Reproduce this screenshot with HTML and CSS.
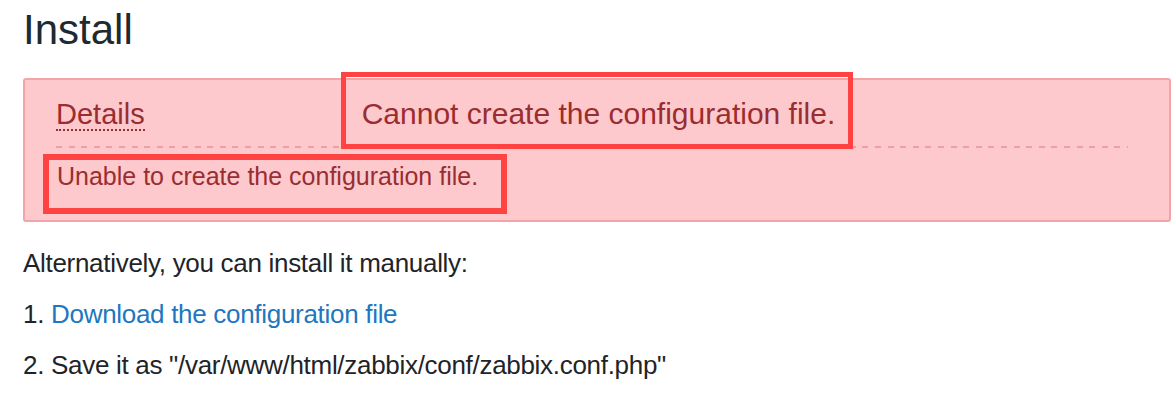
FILE: index.html
```html
<!DOCTYPE html>
<html lang="en">
<head>
<meta charset="utf-8">
<title>Install</title>
<link rel="stylesheet" href="styles.css">
</head>
<body>
<main class="page">
  <h1 class="title">Install</h1>
  <div class="alert">
    <div class="alert-head">
      <span class="details">Details</span>
      <span class="alert-title">Cannot create the configuration file.</span>
    </div>
    <div class="alert-body">Unable to create the configuration file.</div>
    <div class="mark mark-title"></div>
    <div class="mark mark-body"></div>
  </div>
  <p class="line">Alternatively, you can install it manually:</p>
  <p class="line">1. <a class="link" href="#">Download the configuration file</a></p>
  <p class="line">2. Save it as "/var/www/html/zabbix/conf/zabbix.conf.php"</p>
</main>
</body>
</html>
```
FILE: styles.css
```css
html, body {
  margin: 0;
  padding: 0;
  background: #ffffff;
}

.page {
  padding: 6px 5px 0 23px;
  font-family: "Liberation Sans", Arial, sans-serif;
  color: #1f2428;
}

.title {
  margin: 0;
  font-size: 42px;
  font-weight: normal;
  line-height: 48px;
  color: #1e2a30;
}

.alert {
  position: relative;
  margin-top: 24px;
  border: 2px solid #f3a4a7;
  border-radius: 3px;
  background: #fdc9cd;
  color: #9a2d30;
  padding: 16px 41px 0 31px;
  box-sizing: border-box;
  height: 144px;
}

.alert-head {
  display: flex;
  align-items: baseline;
  line-height: 36px;
  padding-bottom: 16px;
  background: repeating-linear-gradient(to right, #eda0a4 0 6px, transparent 6px 12.6px) left bottom / 100% 2px no-repeat;
}

.details {
  flex: none;
  margin-right: 217px;
  font-size: 29px;
  line-height: 30px;
  border-bottom: 2px dotted #9a2d30;
}

.alert-title {
  font-size: 30px;
}

.alert-body {
  margin-top: 13px;
  font-size: 25px;
  line-height: 30px;
  padding-left: 1px;
}

.mark {
  position: absolute;
  border: 5px solid #ff4343;
  box-sizing: border-box;
}

.mark-title {
  left: 316px;
  top: -8px;
  width: 512px;
  height: 77px;
}

.mark-body {
  left: 18px;
  top: 74px;
  width: 464px;
  height: 60px;
  border-width: 6px;
}

.line {
  margin: 0;
  font-size: 26px;
  line-height: 51px;
  letter-spacing: -0.3px;
}

.line:first-of-type {
  margin-top: 16px;
}

.link {
  color: #2077c1;
  text-decoration: none;
}
```
